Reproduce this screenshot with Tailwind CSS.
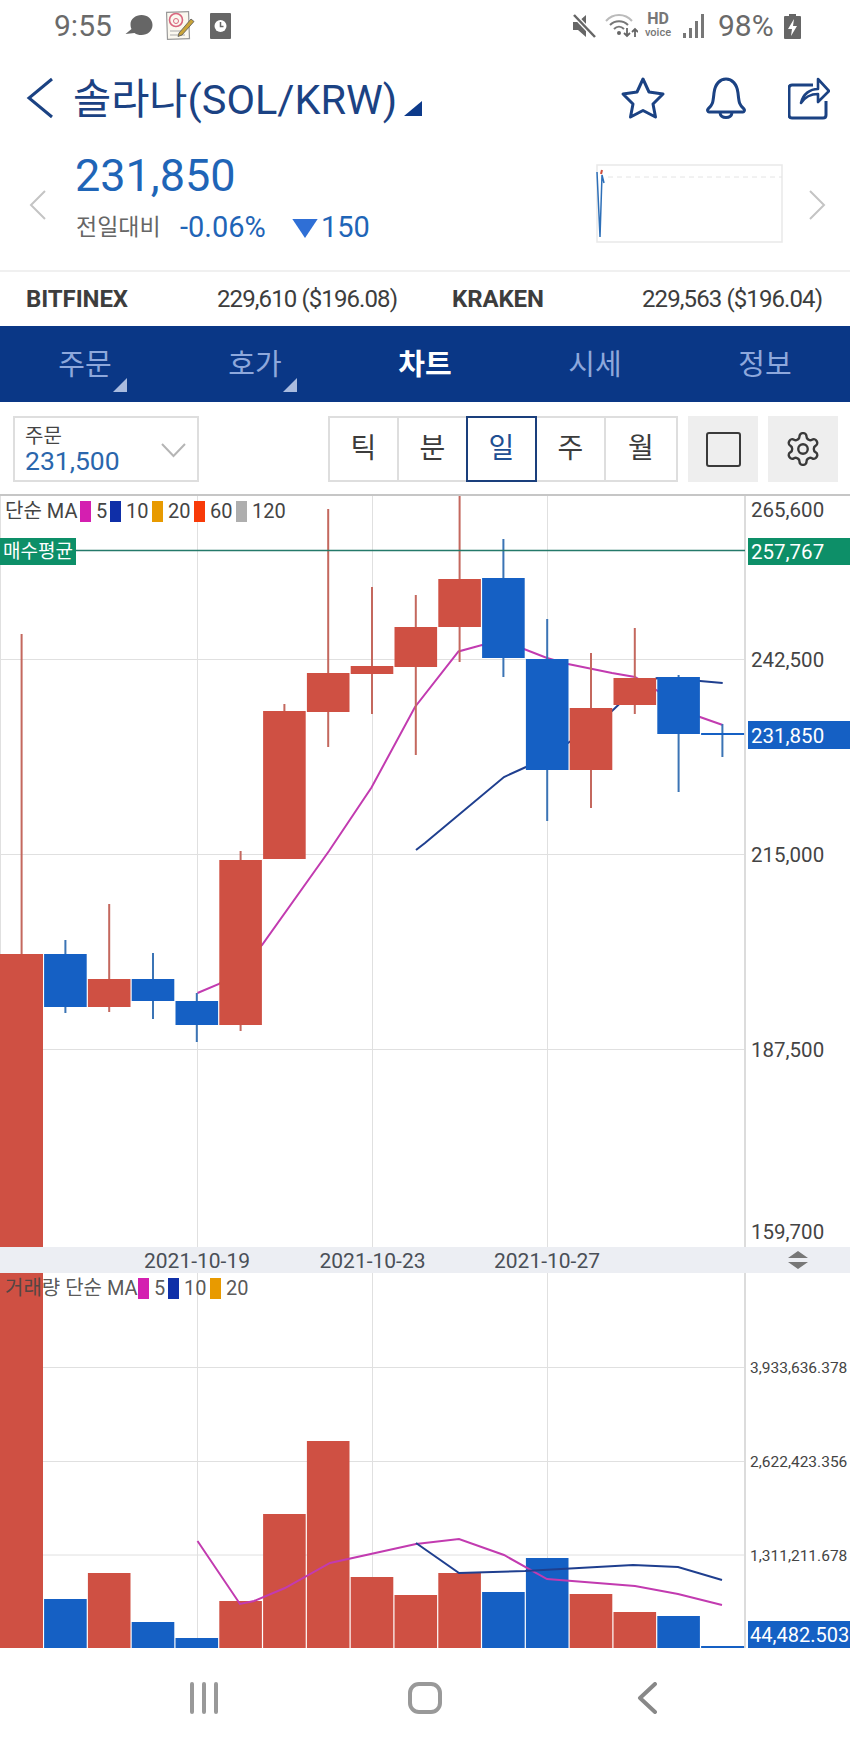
<!DOCTYPE html>
<html lang="ko">
<head>
<meta charset="utf-8">
<title>솔라나(SOL/KRW)</title>
<script src="https://cdn.jsdelivr.net/npm/@tailwindcss/browser@4"></script>
</head>
<body class="m-0 bg-white font-['Roboto','Noto_Sans_CJK_KR',sans-serif]">
<div class="w-[850px] h-[1748px] overflow-hidden flex flex-col bg-white">

  <!-- status bar -->
  <div class="h-[52px] flex items-center text-[#6a6a6a] text-[30px] leading-none">
    <span class="ml-[54px] w-[60px]">9:55</span>
    <svg class="ml-[11px]" width="28" height="24" viewBox="0 0 27 24"><path d="M27 11c0 6-5 10-11 10-3 0-5-.6-7-2l-9 1 6-5c-.6-1-1-3-1-5C5 5 10 1 16 1s11 4 11 10z" fill="#666"/></svg>
    <svg class="ml-[12px]" width="30" height="30" viewBox="0 0 30 30"><rect x="2" y="1" width="22" height="27" fill="#fbf8ef" stroke="#999" stroke-width="1.2" transform="rotate(-2 13 14)"/><circle cx="11" cy="9" r="6.5" fill="none" stroke="#d9667e" stroke-width="1.6"/><circle cx="11" cy="10" r="2.5" fill="none" stroke="#d9667e"/><path d="M5 20h13M5 24h15" stroke="#aaa"/><path d="M14 22L26 8l3 2.500L17 24l-4 1.500z" fill="#c9a43a" stroke="#555" stroke-width=".8"/></svg>
    <svg class="ml-[15px]" width="21" height="26" viewBox="0 0 21 26"><rect width="21" height="26" rx="1" fill="#666"/><circle cx="10.500" cy="13" r="6" fill="#fff"/><path d="M10.500 9v4.500h3" fill="none" stroke="#666" stroke-width="1.500"/></svg>
    <svg class="ml-[341px]" width="24" height="24" viewBox="0 0 24 24"><path d="M1 8h5l8-7v22l-8-7H1z" fill="#666"/><path d="M3 2l20 21" stroke="#fff" stroke-width="5"/><path d="M2 1l21 22" stroke="#666" stroke-width="2.500"/></svg>
    <svg class="ml-[9px]" width="33" height="26" viewBox="0 0 33 26"><path d="M1 8c7-8 19-8 26 0" fill="none" stroke="#bbb" stroke-width="2"/><path d="M5 12c5-5 13-5 18 0M9 16c3-3 7-3 10 0" fill="none" stroke="#777" stroke-width="2"/><circle cx="14" cy="20" r="2" fill="#666"/><path d="M22 15v8m-3-3l3 3 3-3M30 24v-8m-3 3l3-3 3 3" fill="none" stroke="#666" stroke-width="1.800"/></svg>
    <span class="ml-[6px] w-[28px] mb-[4px] flex flex-col items-center text-[#777] font-bold"><span class="text-[16px] leading-[16px]">HD</span><span class="text-[11px] leading-[11px] font-medium">voice</span></span>
    <svg class="ml-[11px]" width="22" height="24" viewBox="0 0 22 24"><rect x="0" y="19" width="3" height="5" fill="#777"/><rect x="6" y="14" width="3" height="10" fill="#777"/><rect x="12" y="7" width="3" height="17" fill="#777"/><rect x="18" y="0" width="3" height="24" fill="#777"/></svg>
    <span class="ml-[13px] w-[57px]">98%</span>
    <svg class="ml-[9px]" width="17" height="25" viewBox="0 0 17 25"><rect x="5" width="7" height="3" fill="#666"/><rect y="2" width="17" height="23" rx="1" fill="#666"/><path d="M10 5L4 15h4l-1 7 6-10H9z" fill="#fff"/></svg>
  </div>

  <!-- title row -->
  <div class="h-[86px] pt-[6px] flex items-center text-[#1b4283]">
    <svg class="ml-[26px]" width="28" height="42" viewBox="0 0 28 42"><path d="M26 2L3 21l23 19" fill="none" stroke="#1b4283" stroke-width="3"/></svg>
    <span class="ml-[19px] mt-[3px] w-[320px] whitespace-nowrap text-[41.500px] leading-none">솔라나(SOL/KRW)</span>
    <svg class="ml-[11px] mt-[21px]" width="18" height="15" viewBox="0 0 18 15"><path d="M18 0v15H0z" fill="#0d3a8a"/></svg>
    <svg class="ml-[198px]" width="46" height="44" viewBox="0 0 46 44"><path d="M23 3l6 13 14 2-10 10 2.500 13L23 34.500 10.500 41 13 28 3 18l14-2z" fill="none" stroke="#1b4283" stroke-width="3" stroke-linejoin="round"/></svg>
    <svg class="ml-[40px]" width="40" height="44" viewBox="0 0 40 44"><path d="M2 33c5-4 5-7 6-16C9 8 14 3 20 3s11 5 12 14c1 9 1 12 6 16 1 1 0 3-1 3H3c-1 0-2-2-1-3z" fill="none" stroke="#1b4283" stroke-width="3" stroke-linejoin="round"/><path d="M14 37c1 6 11 6 12 0" fill="none" stroke="#1b4283" stroke-width="3"/></svg>
    <svg class="ml-[42px]" width="42" height="44" viewBox="0 0 42 44"><path d="M25 9H4c-2 0-3 1-3 3v27c0 2 1 3 3 3h31c2 0 3-1 3-3V25" fill="none" stroke="#1b4283" stroke-width="3"/><path d="M13 27c2-9 9-14 17-14V3l11 12-11 11v-8c-7 0-13 3-17 9z" fill="#fff" stroke="#1b4283" stroke-width="2.600" stroke-linejoin="round"/></svg>
  </div>

  <!-- quote row -->
  <div class="h-[134px] flex border-b-2 border-[#f0f0f0]">
    <svg class="ml-[29px] mt-[52px]" width="17" height="30" viewBox="0 0 17 30"><path d="M16 1L2 15l14 14" fill="none" stroke="#c4c4c4" stroke-width="2"/></svg>
    <div class="ml-[29px] w-[521px]">
      <div class="text-[45px] leading-none text-[#1f65b7] mt-[15px] h-[52px]">231,850</div>
      <div class="flex items-center h-[40px] mt-[3px]">
        <span class="text-[#666] text-[23px] w-[105px] pl-[1px]">전일대비</span>
        <span class="text-[#1f65b7] text-[29px] w-[112px]">-0.06%</span>
        <svg width="26" height="19" viewBox="0 0 24 18"><path d="M0 0h24L12 18z" fill="#2f6fd6"/></svg>
        <span class="text-[#1f65b7] text-[29px] ml-[3px]">150</span>
      </div>
    </div>
    <svg class="mt-[26px]" width="187" height="79" viewBox="0 0 187 79"><rect x="1" y="1" width="185" height="77" fill="#fff" stroke="#e9e9e9" stroke-width="1.500"/><path d="M12 13h174" stroke="#e4e4e4" stroke-dasharray="5 4"/><path d="M6 6l-1 4" stroke="#d0503f" stroke-width="2"/><path d="M1 8l3 65 2-62 2 8" fill="none" stroke="#2d6fb8" stroke-width="1.500"/></svg>
    <svg class="ml-[26px] mt-[52px]" width="17" height="30" viewBox="0 0 17 30"><path d="M1 1l14 14L1 29" fill="none" stroke="#c4c4c4" stroke-width="2"/></svg>
  </div>

  <!-- exchanges -->
  <div class="h-[54px] flex items-center text-[#3d3d3d] text-[24px] leading-none">
    <span class="ml-[26px] w-[191px] font-bold tracking-[-0.1px]">BITFINEX</span>
    <span class="w-[235px] tracking-[-0.9px]">229,610 ($196.08)</span>
    <span class="w-[190px] font-bold tracking-[-0.1px]">KRAKEN</span>
    <span class="tracking-[-0.9px]">229,563 ($196.04)</span>
  </div>

  <!-- tabs -->
  <div class="h-[76px] grid grid-cols-5 bg-[#0a3786] text-[29px] text-[#8ea8dc] leading-none">
    <div class="relative flex items-center justify-center pt-[3px]">주문<svg class="absolute left-[113px] top-[52px]" width="14" height="14" viewBox="0 0 14 14"><path d="M14 0v14H0z" fill="#a9bbdf"/></svg></div>
    <div class="relative flex items-center justify-center pt-[3px]">호가<svg class="absolute left-[113px] top-[52px]" width="14" height="14" viewBox="0 0 14 14"><path d="M14 0v14H0z" fill="#a9bbdf"/></svg></div>
    <div class="flex items-center justify-center pt-[3px] text-white font-bold">차트</div>
    <div class="flex items-center justify-center pt-[3px]">시세</div>
    <div class="flex items-center justify-center pt-[3px]">정보</div>
  </div>

  <!-- toolbar -->
  <div class="h-[94px] flex pt-[14px] pl-[13px] border-b-2 border-[#c6c6c6]">
    <div class="w-[186px] h-[66px] border-2 border-[#dedede] pl-[10px] pt-[7px] relative">
      <div class="text-[20px] leading-[22px] text-[#444]">주문</div>
      <div class="text-[26.500px] leading-[28px] text-[#2a66ac]">231,500</div>
      <svg class="absolute right-[11px] top-[25px]" width="25" height="15" viewBox="0 0 25 15"><path d="M1 1l11.500 12L24 1" fill="none" stroke="#b5b5b5" stroke-width="2"/></svg>
    </div>
    <div class="ml-[129px] w-[350px] h-[66px] flex border-2 border-[#dedede] text-[28px] text-[#3c3c3c] leading-none">
      <div class="w-[69px] flex items-center justify-center border-r-2 border-[#dedede]">틱</div>
      <div class="w-[67px] flex items-center justify-center">분</div>
      <div class="w-[71px] -my-[2px] flex items-center justify-center border-2 border-[#1a3f7c] text-[#1f4f92]">일</div>
      <div class="w-[69px] flex items-center justify-center border-r-2 border-[#dedede]">주</div>
      <div class="flex-1 flex items-center justify-center">월</div>
    </div>
    <div class="ml-[10px] w-[70px] h-[66px] bg-[#eeeeee] flex items-center justify-center">
      <div class="w-[35px] h-[35px] border-[2.5px] border-[#3a3a3a] rounded-[3px]"></div>
    </div>
    <div class="ml-[10px] w-[70px] h-[66px] bg-[#eeeeee] flex items-center justify-center">
      <svg width="38" height="38" viewBox="0 0 24 24" fill="none" stroke="#3a3a3a" stroke-width="1.500"><path d="M12.220 2h-.44a2 2 0 0 0-2 2v.18a2 2 0 0 1-1 1.730l-.43.25a2 2 0 0 1-2 0l-.15-.08a2 2 0 0 0-2.730.73l-.22.38a2 2 0 0 0 .73 2.730l.15.1a2 2 0 0 1 1 1.720v.51a2 2 0 0 1-1 1.740l-.15.09a2 2 0 0 0-.73 2.730l.22.38a2 2 0 0 0 2.730.73l.15-.08a2 2 0 0 1 2 0l.43.25a2 2 0 0 1 1 1.730V20a2 2 0 0 0 2 2h.44a2 2 0 0 0 2-2v-.18a2 2 0 0 1 1-1.730l.43-.25a2 2 0 0 1 2 0l.15.08a2 2 0 0 0 2.730-.73l.22-.39a2 2 0 0 0-.73-2.730l-.15-.08a2 2 0 0 1-1-1.740v-.5a2 2 0 0 1 1-1.740l.15-.09a2 2 0 0 0 .73-2.730l-.22-.38a2 2 0 0 0-2.730-.73l-.15.08a2 2 0 0 1-2 0l-.43-.25a2 2 0 0 1-1-1.730V4a2 2 0 0 0-2-2z"/><circle cx="12" cy="12" r="3"/></svg>
    </div>
  </div>

  <!-- price chart -->
  <div class="relative h-[751px]">
    <svg class="block" width="850" height="751" viewBox="0 496 850 751">
      <g stroke="#e0e0e0" stroke-width="1">
        <path d="M.5 496v751M197.500 496v751M372.500 496v751M547.500 496v751"/>
        <path d="M0 659.500h745M0 854.500h745M0 1049.500h745"/>
      </g>
      <path d="M745 496v751" stroke="#dcdcdc" stroke-width="2"/>
      <polyline points="197.500,993 219,984 262,945 329,851 371.500,787.500 415,707 458.500,651.500 482,645 524,649 547,658 568,664 612,673 635,677 700,717 722.700,725" fill="none" stroke="#c23bb0" stroke-width="2"/>
      <polyline points="416,850 425,843 504,777 526,767 547,756 568,743 612,711 635,689 657,678 700,681 722.700,683" fill="none" stroke="#1f3f8f" stroke-width="2"/>
      <g stroke="#c4685e" stroke-width="2">
        <path d="M21.600 634v320M109.200 904v108M240.600 851v180M284.400 704v10M328.200 509v238M372 587v127M415.800 595v160M459.600 496v166M591 653v155M634.800 628v86"/>
      </g>
      <g stroke="#3b74b5" stroke-width="2">
        <path d="M65.400 940v73M153 953v66M196.800 993v49M503.400 539v138M547.200 619v202M678.600 675v117M722.400 724v33"/>
      </g>
      <path d="M0 550.500h745" stroke="#24796a" stroke-width="1.500"/>
      <g fill="#cf5043">
        <rect x="0" y="954" width="43" height="293"/>
        <rect x="87.900" y="979" width="42.600" height="28"/>
        <rect x="219.300" y="860" width="42.600" height="165"/>
        <rect x="263.100" y="711" width="42.600" height="148"/>
        <rect x="306.900" y="673" width="42.600" height="39"/>
        <rect x="350.700" y="666" width="42.600" height="8"/>
        <rect x="394.500" y="627" width="42.600" height="40"/>
        <rect x="438.300" y="579" width="42.600" height="48"/>
        <rect x="569.700" y="708" width="42.600" height="62"/>
        <rect x="613.500" y="678" width="42.600" height="27"/>
      </g>
      <g fill="#1560c4">
        <rect x="44.100" y="954" width="42.600" height="53"/>
        <rect x="131.700" y="979" width="42.600" height="22"/>
        <rect x="175.500" y="1001" width="42.600" height="24"/>
        <rect x="482.100" y="578" width="42.600" height="80"/>
        <rect x="525.900" y="659" width="42.600" height="111"/>
        <rect x="657.300" y="677" width="42.600" height="57"/>
        <rect x="701.100" y="733" width="43" height="2"/>
      </g>
      <rect x="0" y="538" width="76" height="27" fill="#0d8f68"/>
      <text x="3" y="558" font-size="19" fill="#fff">매수평균</text>
      <rect x="748" y="538" width="102" height="27" fill="#0d8f68"/>
      <rect x="748" y="721" width="102" height="28" fill="#1560c4"/>
      <g font-size="20.500" fill="#444">
        <text x="751" y="517">265,600</text>
        <text x="751" y="667">242,500</text>
        <text x="751" y="861.500">215,000</text>
        <text x="751" y="1057">187,500</text>
        <text x="751" y="1239">159,700</text>
        <text x="751" y="559" fill="#fff">257,767</text>
        <text x="751" y="743" fill="#fff">231,850</text>
      </g>
    </svg>
    <div class="absolute left-[5px] top-[4px] h-[22px] flex items-center text-[20px] leading-none text-[#444]">
      <span class="w-[75px]">단순 MA</span>
      <span class="w-[11px] h-[21px] bg-[#d41fb0]"></span><span class="w-[19px] pl-[5px]">5</span>
      <span class="w-[11px] h-[21px] bg-[#0f2fa8]"></span><span class="w-[31px] pl-[5px]">10</span>
      <span class="w-[11px] h-[21px] bg-[#e89a00]"></span><span class="w-[31px] pl-[5px]">20</span>
      <span class="w-[11px] h-[21px] bg-[#f83a08]"></span><span class="w-[31px] pl-[5px]">60</span>
      <span class="w-[11px] h-[21px] bg-[#aeaeae]"></span><span class="pl-[5px]">120</span>
    </div>
  </div>

  <!-- date strip -->
  <svg class="block shrink-0" width="850" height="26" viewBox="0 1247 850 26">
    <rect x="0" y="1247" width="850" height="26" fill="#eceef3"/>
    <g font-size="21" fill="#4a4f57" text-anchor="middle">
      <text x="197" y="1267.500">2021-10-19</text>
      <text x="372.500" y="1267.500">2021-10-23</text>
      <text x="547" y="1267.500">2021-10-27</text>
    </g>
    <path d="M788 1258l10-7 10 7zM788 1262h20l-10 7z" fill="#777"/>
  </svg>

  <!-- volume chart -->
  <div class="relative h-[375px]">
    <svg class="block" width="850" height="375" viewBox="0 1273 850 375">
      <g stroke="#e0e0e0" stroke-width="1">
        <path d="M197.500 1273v375M372.500 1273v375M547.500 1273v375"/>
        <path d="M0 1367.500h745M0 1461.500h745M0 1555h745"/>
      </g>
      <path d="M745 1273v375" stroke="#dcdcdc" stroke-width="2"/>
      <g fill="#cf5043">
        <rect x="0" y="1273" width="43" height="375"/>
        <rect x="87.900" y="1573" width="42.600" height="75"/>
        <rect x="219.300" y="1601" width="42.600" height="47"/>
        <rect x="263.100" y="1514" width="42.600" height="134"/>
        <rect x="306.900" y="1441" width="42.600" height="207"/>
        <rect x="350.700" y="1577" width="42.600" height="71"/>
        <rect x="394.500" y="1595" width="42.600" height="53"/>
        <rect x="438.300" y="1573" width="42.600" height="75"/>
        <rect x="569.700" y="1594" width="42.600" height="54"/>
        <rect x="613.500" y="1612" width="42.600" height="36"/>
      </g>
      <g fill="#1560c4">
        <rect x="44.100" y="1599" width="42.600" height="49"/>
        <rect x="131.700" y="1622" width="42.600" height="26"/>
        <rect x="175.500" y="1638" width="42.600" height="10"/>
        <rect x="482.100" y="1592" width="42.600" height="56"/>
        <rect x="525.900" y="1558" width="42.600" height="90"/>
        <rect x="657.300" y="1616" width="42.600" height="32"/>
        <rect x="701.100" y="1646" width="43" height="2"/>
      </g>
      <polyline points="197.500,1541 240,1604 254,1601 285,1588 330,1563 416,1544 459,1539 504,1555 547,1579 635,1586 678,1594 722,1605" fill="none" stroke="#c23bb0" stroke-width="2"/>
      <polyline points="416,1543 459,1573 525,1571 633,1565 678,1567 722,1580" fill="none" stroke="#1f3f8f" stroke-width="2"/>
      <rect x="748" y="1621" width="102" height="27" fill="#1560c4"/>
      <g font-size="15.500" fill="#444">
        <text x="750" y="1372.500">3,933,636.378</text>
        <text x="750" y="1467">2,622,423.356</text>
        <text x="750" y="1560.500">1,311,211.678</text>
      </g>
      <text x="750" y="1642" font-size="20" fill="#fff">44,482.503</text>
    </svg>
    <div class="absolute left-[5px] top-[4px] h-[22px] flex items-center text-[20px] leading-none text-[#444]/90">
      <span class="w-[133px]">거래량 단순 MA</span>
      <span class="w-[11px] h-[21px] bg-[#d41fb0]"></span><span class="w-[19px] pl-[5px]">5</span>
      <span class="w-[11px] h-[21px] bg-[#0f2fa8]"></span><span class="w-[31px] pl-[5px]">10</span>
      <span class="w-[11px] h-[21px] bg-[#e89a00]"></span><span class="pl-[5px]">20</span>
    </div>
  </div>

  <!-- nav bar -->
  <div class="h-[100px] relative flex items-start pt-[34px]">
    <svg class="ml-[189px]" width="30" height="32" viewBox="0 0 30 32"><path d="M3 2v28M15 2v28M27 2v28" stroke="#999" stroke-width="4" stroke-linecap="round"/></svg>
    <svg class="ml-[189px]" width="34" height="32" viewBox="0 0 34 32"><rect x="2" y="2" width="30" height="28" rx="9" fill="none" stroke="#999" stroke-width="4"/></svg>
    <svg class="ml-[195px]" width="20" height="32" viewBox="0 0 20 32"><path d="M18 2L3 16l15 14" fill="none" stroke="#888" stroke-width="4" stroke-linecap="round" stroke-linejoin="round"/></svg>
  </div>
</div>
</body>
</html>
